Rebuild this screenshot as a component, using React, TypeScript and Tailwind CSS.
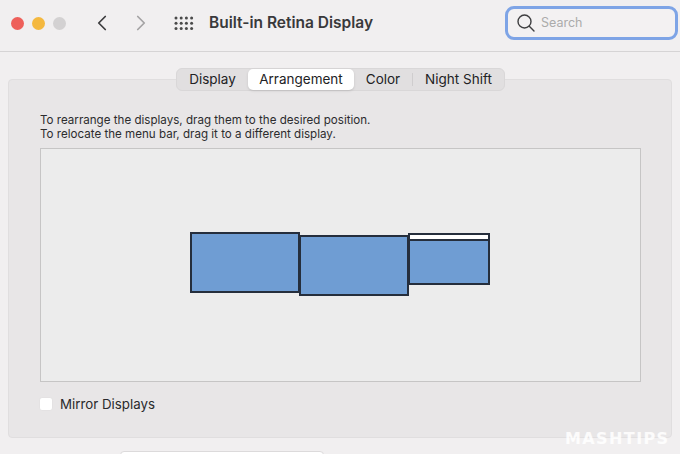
import { ChevronLeft, ChevronRight } from 'lucide-react';

const tabs = ['Display', 'Arrangement', 'Color', 'Night Shift'];

function GridIcon() {
    return (
        <svg width="20" height="15" viewBox="0 0 20 15" className="fill-[#4a4a4a]">
            {[0, 1, 2].map((row) =>
                [0, 1, 2, 3].map((col) => (
                    <circle key={`${row}-${col}`} cx={2 + col * 5.2} cy={2 + row * 5.2} r="1.5" />
                ))
            )}
        </svg>
    );
}

function SearchGlyph() {
    return (
        <svg width="20" height="20" viewBox="0 0 20 20" fill="none" stroke="#3f3f41" strokeWidth="1.4" strokeLinecap="round">
            <circle cx="8.5" cy="8.5" r="6.5" />
            <path d="M13.3 13.3 L18 18" />
        </svg>
    );
}

function Monitor({ className, menuBar }: { className: string; menuBar?: boolean }) {
    return (
        <div className={`absolute border-2 border-[#252e3c] bg-[#6f9dd3] ${className}`}>
            {menuBar && <div className="h-[4px] bg-white border-b-2 border-[#252e3c] box-content" />}
        </div>
    );
}

export default function App() {
    return (
        <div className="relative w-[680px] h-[454px] overflow-hidden bg-[#f1eff0] text-[#2a2a2c] font-['Inter','Liberation_Sans',sans-serif]">
            <div className="h-[52px] flex items-center border-b border-[#d6d4d5] pl-[11px] pr-[2px] pb-[5px]">
                <div className="flex items-center gap-[8px]">
                    <div className="w-[13px] h-[13px] rounded-full bg-[#ee5f5a]" />
                    <div className="w-[13px] h-[13px] rounded-full bg-[#f4b83f]" />
                    <div className="w-[13px] h-[13px] rounded-full bg-[#d3d1d2]" />
                </div>
                <ChevronLeft size={26} strokeWidth={1.6} className="ml-[23px] text-[#3c3c3e]" />
                <ChevronRight size={26} strokeWidth={1.6} className="ml-[13px] text-[#a4a3a4]" />
                <div className="ml-[20px]"><GridIcon /></div>
                <div className="ml-[15px] text-[15.5px] font-semibold leading-none text-[#39393b]">Built-in Retina Display</div>
                <div className="ml-auto w-[173px] h-[34px] flex items-center rounded-[9px] border-[3px] border-[#7ea4e6] bg-[#f3f1f2] pl-[8px]">
                    <SearchGlyph />
                    <span className="ml-[5px] text-[12.5px] text-[#ababab]">Search</span>
                </div>
            </div>

            <div className="relative z-10 mt-[16px] -mb-[12px] flex justify-center pl-[1px]">
                <div className="flex items-center h-[23px] rounded-[6px] bg-[#e1dfe0] border border-[#d9d7d8] text-[13.5px] leading-none text-[#222224]">
                    {tabs.map((tab) => (
                        <div
                            key={tab}
                            className={
                                tab === 'Arrangement'
                                    ? 'h-[21px] w-[106px] flex items-center justify-center rounded-[5px] bg-white shadow-sm'
                                    : tab === 'Display'
                                      ? 'w-[71px] text-center'
                                      : tab === 'Color'
                                        ? 'w-[59px] text-center border-r border-[#cfcdce]'
                                        : 'w-[91px] text-center'
                            }
                        >
                            {tab}
                        </div>
                    ))}
                </div>
            </div>

            <div className="mx-[8px] h-[359px] rounded-[4px] bg-[#e8e6e7] border border-[#e0dedf] px-[31px] pt-[33px]">
                <p className="text-[11.6px] leading-[14px] text-[#2c2c2e]">
                    To rearrange the displays, drag them to the desired position.
                    <br />
                    To relocate the menu bar, drag it to a different display.
                </p>
                <div className="relative mt-[7px] h-[234px] w-[601px] bg-[#ececec] border border-[#c6c5c5]">
                    <Monitor className="left-[149px] top-[83px] w-[110px] h-[61px]" />
                    <Monitor className="left-[258px] top-[86px] w-[110px] h-[61px]" />
                    <Monitor menuBar className="left-[367px] top-[84px] w-[82px] h-[52px]" />
                </div>
                <div className="mt-[14px] flex items-center gap-[7px] -ml-[1px]">
                    <div className="w-[14px] h-[14px] rounded-[3px] bg-white border border-[#e4e2e3]" />
                    <span className="text-[13.3px] leading-none pt-[2px] text-[#2a2a2c]">Mirror Displays</span>
                </div>
            </div>

            <div className="ml-[120px] mt-[13px] w-[204px] h-[10px] rounded-[4px] bg-white border border-[#dcdadb]" />

            <div className="absolute left-[565px] top-[431px] text-[16px] leading-[16px] font-bold tracking-[1.4px] text-white/85 font-['DejaVu_Sans',sans-serif]">
                MASHTIPS
            </div>
        </div>
    );
}
